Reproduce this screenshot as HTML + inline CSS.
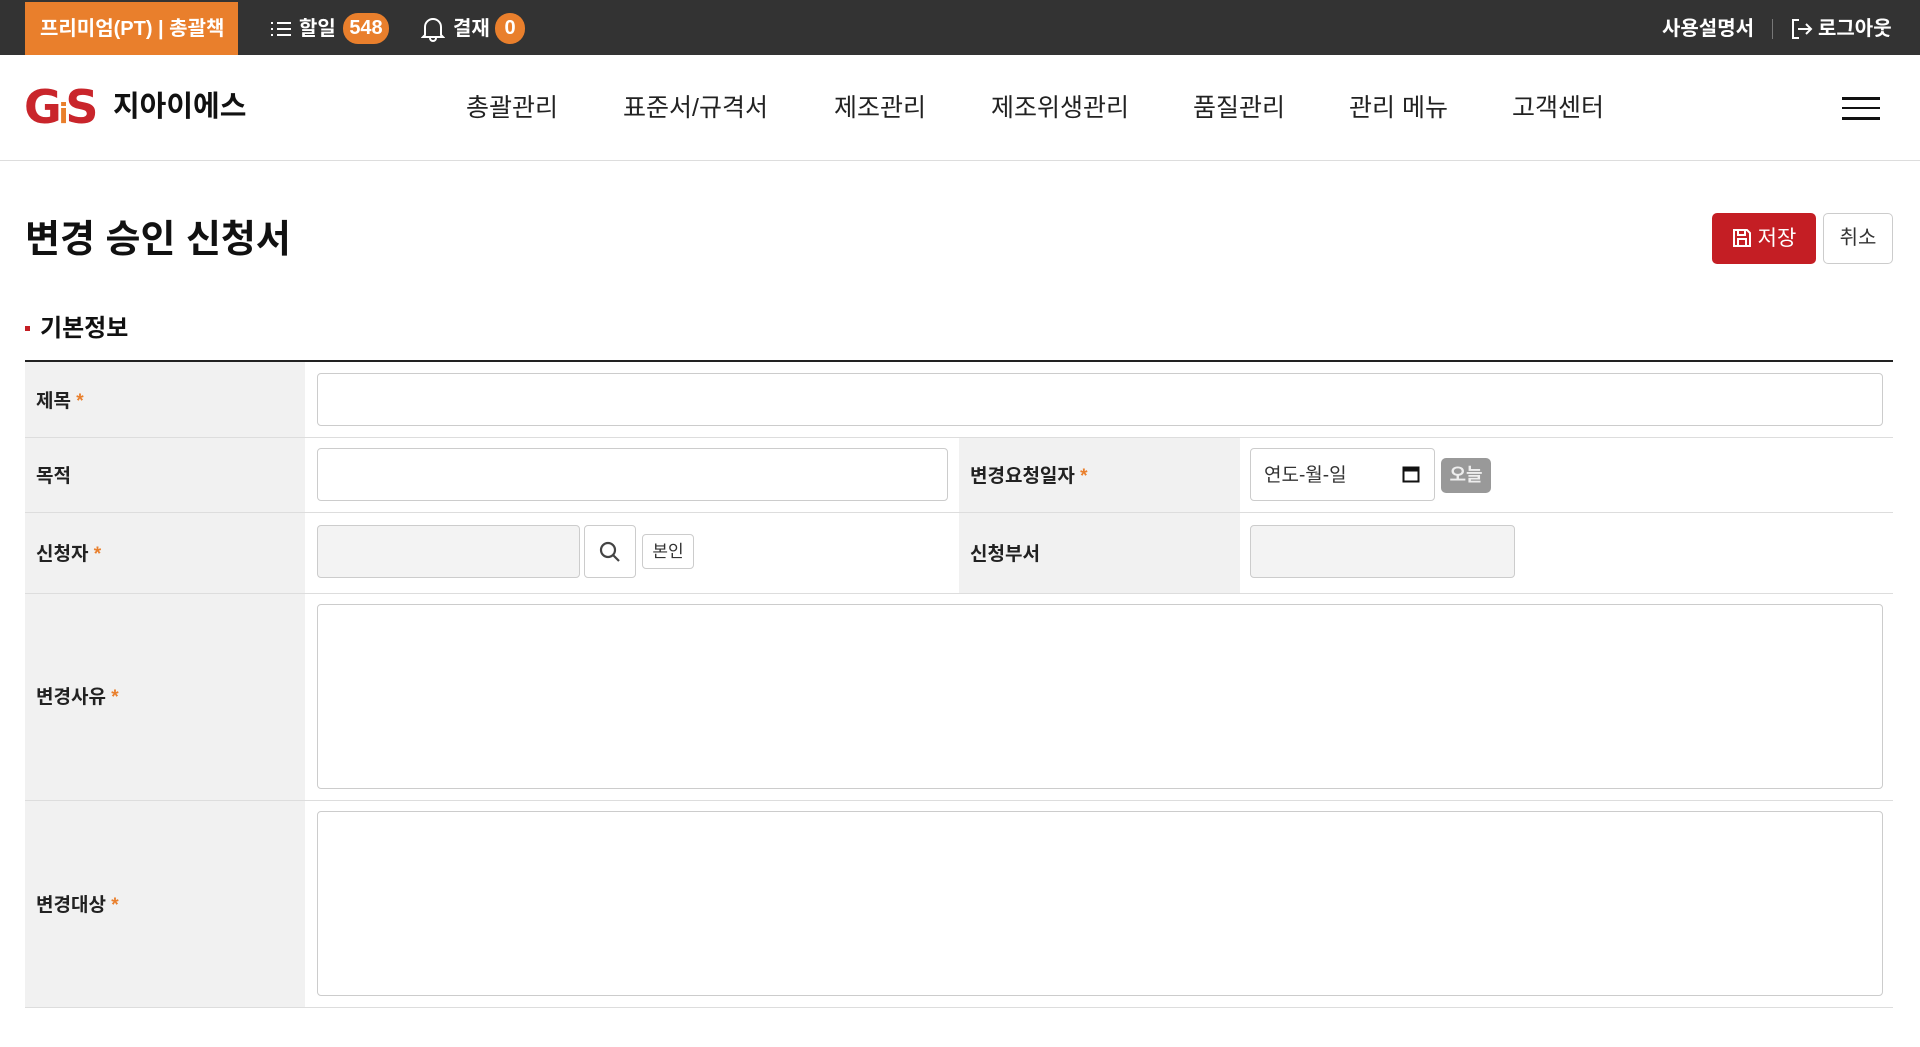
<!DOCTYPE html>
<html><head><meta charset="utf-8"><style>
*{margin:0;padding:0;box-sizing:border-box}
body{width:1920px;height:1047px;position:relative;background:#fff;font-family:"Liberation Sans","Noto Sans CJK KR",sans-serif;color:#222;overflow:hidden}
.a{position:absolute}
.top{left:0;top:0;width:1920px;height:55px;background:#333}
.w{color:#fff;font-weight:bold;font-size:20px;line-height:55px;top:2px}
.badge{background:#e97f2c;color:#fff;border-radius:15px;height:31px;line-height:31px;text-align:center;font-weight:bold;font-size:20px;top:13px}
.nav{font-size:25px;top:90px;line-height:36px;color:#222}
.inp{border:1px solid #ccc;border-radius:4px;background:#fff}
.lab{font-weight:bold;font-size:19px;color:#222}
.st{color:#e97f2c}
.hl{left:25px;width:1868px;height:1px;background:#ddd}
</style></head><body>
<div class="a top"></div>
<div class="a" style="left:25px;top:2px;width:213px;height:53px;background:#e97f2c"></div>
<div class="a w" style="left:40px">프리미엄(PT) | 총괄책</div>
<svg class="a" style="left:270px;top:20px" width="22" height="18" viewBox="0 0 22 18" fill="none" stroke="#fff" stroke-width="2"><path d="M1 3h2M1 9h2M1 15h2M7 3h14M7 9h14M7 15h14"/></svg>
<div class="a w" style="left:299px">할일</div>
<div class="a badge" style="left:343px;width:46px">548</div>
<svg class="a" style="left:421px;top:16px" width="24" height="26" viewBox="0 0 24 26" fill="none" stroke="#fff" stroke-width="2"><path d="M4 19V11a8 8 0 0116 0v8l2 2H2zM9 22a3 3 0 006 0"/></svg>
<div class="a w" style="left:453px">결재</div>
<div class="a badge" style="left:495px;width:30px">0</div>
<div class="a w" style="left:1662px">사용설명서</div>
<div class="a" style="left:1772px;top:19px;width:1px;height:20px;background:#777"></div>
<svg class="a" style="left:1791px;top:18px" width="22" height="22" viewBox="0 0 22 22" fill="none" stroke="#fff" stroke-width="2"><path d="M8 2H2v18h6M7 11h13M15 6l5 5-5 5"/></svg>
<div class="a w" style="left:1818px">로그아웃</div>

<div class="a" style="left:24px;top:83px;font-size:46px;font-weight:900;color:#c9252b;letter-spacing:-3px;line-height:48px;font-family:'DejaVu Sans',sans-serif">G<span style="color:#e97f2c;font-size:28px">i</span>S</div>
<div class="a" style="left:113px;top:88px;font-size:29px;font-weight:bold;color:#111;line-height:38px">지아이에스</div>
<div class="a nav" style="left:466px">총괄관리</div>
<div class="a nav" style="left:623px">표준서/규격서</div>
<div class="a nav" style="left:834px">제조관리</div>
<div class="a nav" style="left:991px">제조위생관리</div>
<div class="a nav" style="left:1193px">품질관리</div>
<div class="a nav" style="left:1349px">관리 메뉴</div>
<div class="a nav" style="left:1512px">고객센터</div>
<div class="a" style="left:1842px;top:97px;width:38px;height:3px;background:#111"></div>
<div class="a" style="left:1842px;top:107px;width:38px;height:2px;background:#111"></div>
<div class="a" style="left:1842px;top:117px;width:38px;height:3px;background:#111"></div>
<div class="a" style="left:0;top:160px;width:1920px;height:1px;background:#ddd"></div>

<div class="a" style="left:25px;top:215px;font-size:38px;font-weight:bold;color:#111;line-height:50px">변경 승인 신청서</div>
<div class="a" style="left:1712px;top:213px;width:104px;height:51px;background:#c41e24;border-radius:5px;color:#fff;font-size:21px;line-height:51px;text-align:center"><svg style="vertical-align:-3px;margin-right:6px" width="20" height="20" viewBox="0 0 20 20" fill="none" stroke="#fff" stroke-width="2"><path d="M2 2h13l3 3v13H2zM6 2v5h7V2M6 18v-7h8v7"/></svg>저장</div>
<div class="a" style="left:1823px;top:213px;width:70px;height:51px;border:1px solid #ccc;border-radius:5px;font-size:20px;line-height:49px;text-align:center;color:#333">취소</div>

<div class="a" style="left:25px;top:326px;width:5px;height:5px;background:#c41e24"></div>
<div class="a" style="left:40px;top:314px;font-size:24px;font-weight:bold;color:#111;line-height:30px">기본정보</div>
<div class="a" style="left:25px;top:360px;width:1868px;height:2px;background:#222"></div>

<div class="a" style="left:25px;top:362px;width:280px;height:645px;background:#f1f1f1"></div>
<div class="a" style="left:959px;top:437px;width:281px;height:156px;background:#f1f1f1"></div>
<div class="a hl" style="top:437px"></div>
<div class="a hl" style="top:512px"></div>
<div class="a hl" style="top:593px"></div>
<div class="a hl" style="top:800px"></div>
<div class="a hl" style="top:1007px"></div>

<div class="a lab" style="left:36px;top:386px">제목 <span class="st">*</span></div>
<div class="a inp" style="left:317px;top:373px;width:1566px;height:53px"></div>
<div class="a lab" style="left:36px;top:461px">목적</div>
<div class="a inp" style="left:317px;top:448px;width:631px;height:53px"></div>
<div class="a lab" style="left:970px;top:461px">변경요청일자 <span class="st">*</span></div>
<div class="a inp" style="left:1250px;top:448px;width:185px;height:53px;font-size:19px;color:#333;line-height:53px;padding-left:13px">연도-월-일</div>
<svg class="a" style="left:1402px;top:465px" width="18" height="18" viewBox="0 0 18 18"><rect x="1.5" y="2.5" width="15" height="14" fill="none" stroke="#111" stroke-width="2"/><rect x="1.5" y="2.5" width="15" height="4" fill="#111"/></svg>
<div class="a" style="left:1441px;top:458px;width:50px;height:35px;background:#999;border-radius:5px;color:#eee;font-size:18px;font-weight:bold;line-height:35px;text-align:center">오늘</div>

<div class="a lab" style="left:36px;top:539px">신청자 <span class="st">*</span></div>
<div class="a inp" style="left:317px;top:525px;width:263px;height:53px;background:#f3f3f3"></div>
<div class="a inp" style="left:584px;top:525px;width:52px;height:53px"></div>
<svg class="a" style="left:598px;top:540px" width="24" height="24" viewBox="0 0 24 24" fill="none" stroke="#444" stroke-width="2.2"><circle cx="10" cy="10" r="7"/><path d="M15 15l6 6"/></svg>
<div class="a inp" style="left:642px;top:534px;width:52px;height:35px;font-size:17px;line-height:33px;text-align:center;color:#333">본인</div>
<div class="a lab" style="left:970px;top:539px">신청부서</div>
<div class="a inp" style="left:1250px;top:525px;width:265px;height:53px;background:#f3f3f3"></div>

<div class="a lab" style="left:36px;top:682px">변경사유 <span class="st">*</span></div>
<div class="a inp" style="left:317px;top:604px;width:1566px;height:185px"></div>
<div class="a lab" style="left:36px;top:890px">변경대상 <span class="st">*</span></div>
<div class="a inp" style="left:317px;top:811px;width:1566px;height:185px"></div>
</body></html>
